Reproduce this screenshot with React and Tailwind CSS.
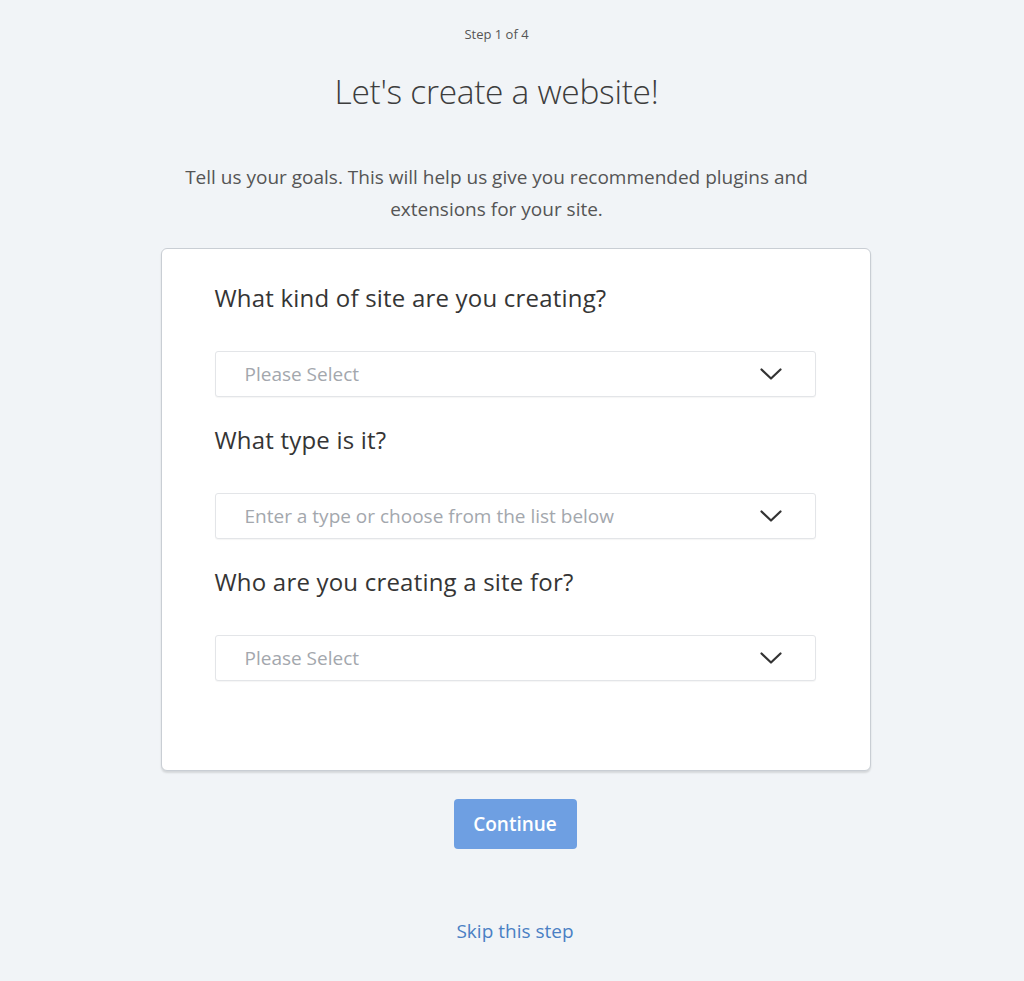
import React from "react";

function Chevron() {
  return (
    <svg width="22" height="12" viewBox="0 0 22 12" fill="none" className="shrink-0">
      <path d="M1.5 1.5 L11 10.5 L20.5 1.5" stroke="#333" strokeWidth="2.2" strokeLinecap="round" strokeLinejoin="round" />
    </svg>
  );
}

function Field({ label, placeholder, first }) {
  return (
    <div className={first ? "" : "mt-[27px]"}>
      <div className="text-[24px] leading-[32px] font-medium tracking-[0.2px] text-[#353535]">{label}</div>
      <div className="mt-[37px] h-[46px] w-[601px] rounded-[3px] border border-[#e3e5e8] bg-white flex items-center justify-between pl-[29px] pr-[33px] shadow-[0_1px_1px_rgba(0,0,0,0.04)]">
        <span className="text-[19px] text-[#a3a7ad]">{placeholder}</span>
        <Chevron />
      </div>
    </div>
  );
}

export default function App() {
  return (
    <div className="min-h-[981px] w-full bg-[#f1f4f7] flex flex-col items-center" style={{ fontFamily: '"Open Sans", sans-serif' }}>
      <div className="flex flex-col items-center mr-[31px]">
        <div className="mt-[25px] text-[13px] leading-[18px] text-[#555]">Step 1 of 4</div>
        <h1 className="mt-[28px] text-[33.5px] leading-[40px] font-light text-[#3d3d3d] tracking-[-0.3px]">Let's create a website!</h1>
        <p className="mt-[50px] text-[19px] leading-[32px] text-[#555] text-center w-[680px]">
          Tell us your goals. This will help us give you recommended plugins and extensions for your site.
        </p>
      </div>
      <div className="mt-[23px] ml-[7px] w-[710px] h-[523px] rounded-[6px] bg-white border border-[#c9ced4] shadow-[0_2px_2px_rgba(0,0,0,0.12)] pl-[53px] pt-[33px]">
        <Field first label="What kind of site are you creating?" placeholder="Please Select" />
        <Field label="What type is it?" placeholder="Enter a type or choose from the list below" />
        <Field label="Who are you creating a site for?" placeholder="Please Select" />
      </div>
      <button className="mt-[28px] ml-[6px] w-[123px] h-[50px] rounded-[4px] bg-[#6e9fe2] text-white text-[19px] font-semibold">
        Continue
      </button>
      <a className="mt-[70px] ml-[6px] text-[19px] text-[#4a7fc4] leading-[24px]">Skip this step</a>
    </div>
  );
}
